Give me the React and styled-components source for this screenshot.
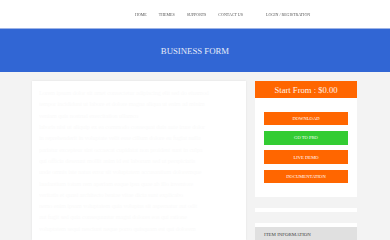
import React from "react";
import styled, { createGlobalStyle } from "styled-components";

const Global = createGlobalStyle`
  html, body { margin: 0; padding: 0; }
  body {
    background: #f3f3f3;
    font-family: "Liberation Serif", "Times New Roman", serif;
    width: 390px;
    height: 240px;
    overflow: hidden;
  }
`;

const Header = styled.header`
  height: 28px;
  background: #ffffff;
  display: flex;
  align-items: center;
`;

const Nav = styled.nav`
  display: flex;
  align-items: center;
  padding-left: 135px;
  gap: 12px;
  filter: grayscale(1);
`;

const NavLink = styled.span`
  font-size: 4px;
  color: #555555;
  white-space: nowrap;
  margin-left: ${(p) => (p.$wide ? "11px" : "0")};
`;

const Banner = styled.section`
  height: 43px;
  background: #3166d4;
  border-top: 1px solid #9db3e6;
  display: flex;
  align-items: center;
  justify-content: center;
`;

const BannerTitle = styled.h1`
  margin: 0;
  font-weight: normal;
  font-size: 8.75px;
  color: #e6ecf8;
`;

const Main = styled.main`
  display: flex;
  gap: 9px;
  padding: 9px 33px 0 32px;
  align-items: flex-start;
`;

const Card = styled.div`
  width: 214px;
  height: 159px;
  overflow: hidden;
  background: #fff;
  box-shadow: 0 0 2px rgba(0, 0, 0, 0.08);
  padding: 8px 7px;
  box-sizing: border-box;
  display: flex;
  flex-direction: column;
  gap: 4px;
`;

const FaintLine = styled.div`
  font-size: 6px;
  line-height: 8px;
  color: #fafafa;
  white-space: nowrap;
  overflow: hidden;
`;

const Side = styled.aside`
  width: 102px;
  height: 159px;
  overflow: hidden;
  display: flex;
  flex-direction: column;
`;

const PriceHead = styled.div`
  height: 17px;
  flex: none;
  background: #ff6600;
  color: #fff3ea;
  font-size: 8.6px;
  display: flex;
  align-items: center;
  justify-content: center;
`;

const Panel = styled.div`
  background: #fff;
  padding: 14px 9px 14px;
  display: flex;
  flex-direction: column;
  gap: 5.8px;
`;

const Btn = styled.div`
  height: 13.4px;
  background: ${(p) => (p.$green ? "#33cc33" : "#ff6600")};
  color: #fff;
  font-size: 4.6px;
  display: flex;
  align-items: center;
  justify-content: center;
  white-space: nowrap;
`;

const Strip = styled.div`
  height: 4px;
  flex: none;
  background: #fff;
  margin-top: 11px;
`;

const InfoBox = styled.div`
  margin-top: 11px;
  flex: none;
  background: #fff;
  padding: 4px 0 0;
`;

const InfoHead = styled.div`
  height: 16px;
  background: #e0e0e0;
  color: #444;
  font-size: 4.9px;
  display: flex;
  align-items: center;
  padding-left: 9px;
`;

const lines = [
  "Lorem ipsum dolor sit amet consectetur adipiscing elit sed do eiusmod",
  "tempor incididunt ut labore et dolore magna aliqua ut enim ad minim",
  "veniam quis nostrud exercitation ullamco",
  "laboris nisi ut aliquip ex ea commodo consequat duis aute irure dolor",
  "in reprehenderit in voluptate velit esse cillum dolore eu fugiat nulla",
  "pariatur excepteur sint occaecat cupidatat non proident sunt in culpa",
  "qui officia deserunt mollit anim id est laborum sed ut perspiciatis",
  "unde omnis iste natus error sit voluptatem accusantium doloremque",
  "laudantium totam rem aperiam eaque ipsa quae ab illo inventore",
  "veritatis et quasi architecto beatae vitae dicta sunt explicabo",
  "nemo enim ipsam voluptatem quia voluptas sit aspernatur aut odit",
  "aut fugit sed quia consequuntur magni dolores eos qui ratione",
  "voluptatem sequi nesciunt neque porro quisquam est qui dolorem",
];

export default function App() {
  return (
    <>
      <Global />
      <Header>
        <Nav>
          <NavLink>HOME</NavLink>
          <NavLink>THEMES</NavLink>
          <NavLink>SUPPORTS</NavLink>
          <NavLink>CONTACT US</NavLink>
          <NavLink $wide>LOGIN / REGISTRATION</NavLink>
        </Nav>
      </Header>
      <Banner>
        <BannerTitle>BUSINESS FORM</BannerTitle>
      </Banner>
      <Main>
        <Card>
          {lines.map((l, i) => (
            <FaintLine key={i}>{l}</FaintLine>
          ))}
        </Card>
        <Side>
          <PriceHead>Start From : $0.00</PriceHead>
          <Panel>
            <Btn>DOWNLOAD</Btn>
            <Btn $green>GO TO PRO</Btn>
            <Btn>LIVE DEMO</Btn>
            <Btn>DOCUMENTATION</Btn>
          </Panel>
          <Strip />
          <InfoBox>
            <InfoHead>ITEM INFORMATION</InfoHead>
          </InfoBox>
        </Side>
      </Main>
    </>
  );
}
